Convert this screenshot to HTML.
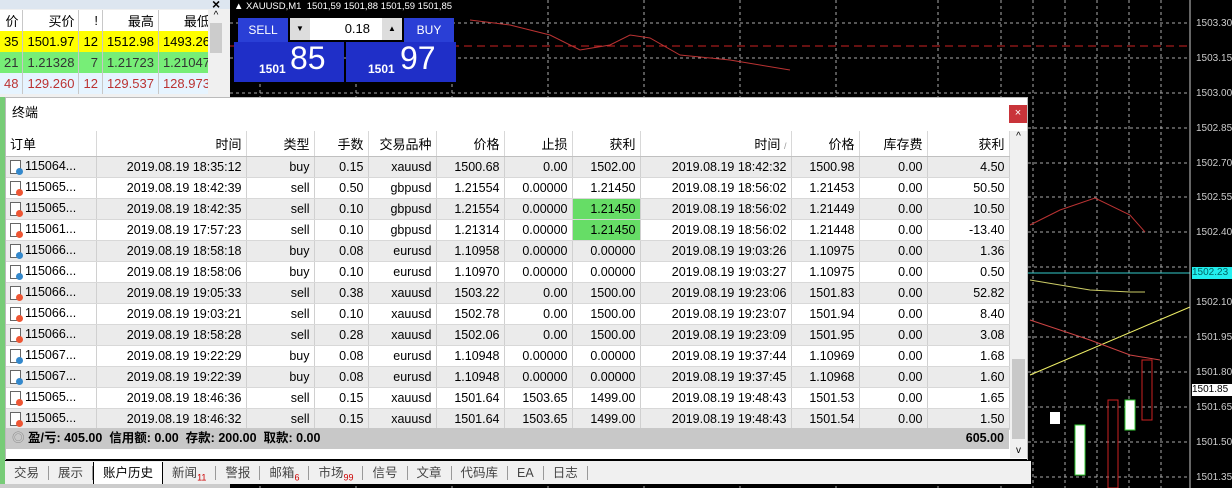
<!DOCTYPE html>
<html><head><meta charset="utf-8"><style>
*{margin:0;padding:0;box-sizing:border-box}
body{width:1232px;height:488px;overflow:hidden;background:#000;position:relative;font-family:"Liberation Sans","Noto Sans CJK SC",sans-serif;font-size:12px;color:#000}
.a{position:absolute}
.mw td{border-right:1px solid #c8c8c8;text-align:right;padding:0 4px;height:21px;font-size:13px}
table{border-collapse:collapse}
.t td{height:21px;border-right:1px solid #d0d0d0;border-bottom:1px solid #d8d8d8;text-align:right;padding:0 4px;font-size:12.5px;white-space:nowrap;overflow:hidden}
.t tr:nth-child(even) td{background:#ebebeb}
.t th{height:25px;font-weight:normal;text-align:right;padding:0 4px;border-right:1px solid #d8d8d8;border-bottom:1px solid #c0c0c0;font-size:13px;background:#fff}
.ic{display:inline-block;width:11px;height:14px;border:1px solid #666;background:#fff;vertical-align:middle;position:relative;margin-right:4px}
.ic i{position:absolute;right:-3px;bottom:-2px;width:7px;height:7px;border-radius:50%}
.pl{position:absolute;left:1196px;font-size:10px;color:#ccc}
.tab{display:inline-block;padding:0 9px;border-right:1px solid #999;height:14px;line-height:14px;color:#444;margin-top:5px;font-size:12.5px}
.tab sub{color:#c00;font-size:9px}
</style></head><body>
<svg class="a" style="left:230px;top:0" width="1002" height="488">
<g stroke="#aaa" stroke-dasharray="3,3" stroke-width="1">
<line x1="0" y1="23" x2="960" y2="23"/><line x1="0" y1="58" x2="960" y2="58"/><line x1="0" y1="93" x2="960" y2="93"/><line x1="0" y1="128" x2="960" y2="128"/><line x1="0" y1="163" x2="960" y2="163"/><line x1="0" y1="197" x2="960" y2="197"/><line x1="0" y1="232" x2="960" y2="232"/><line x1="0" y1="267" x2="960" y2="267"/><line x1="0" y1="302" x2="960" y2="302"/><line x1="0" y1="337" x2="960" y2="337"/><line x1="0" y1="372" x2="960" y2="372"/><line x1="0" y1="407" x2="960" y2="407"/><line x1="0" y1="442" x2="960" y2="442"/><line x1="0" y1="477" x2="960" y2="477"/>
<line x1="30" y1="0" x2="30" y2="488"/><line x1="126" y1="0" x2="126" y2="488"/><line x1="222" y1="0" x2="222" y2="488"/><line x1="318" y1="0" x2="318" y2="488"/><line x1="414" y1="0" x2="414" y2="488"/><line x1="510" y1="0" x2="510" y2="488"/><line x1="606" y1="0" x2="606" y2="488"/><line x1="708" y1="0" x2="708" y2="488"/><line x1="771" y1="0" x2="771" y2="488"/><line x1="803" y1="0" x2="803" y2="488"/><line x1="835" y1="0" x2="835" y2="488"/><line x1="867" y1="0" x2="867" y2="488"/><line x1="899" y1="0" x2="899" y2="488"/><line x1="931" y1="0" x2="931" y2="488"/>
</g>
<line x1="0" y1="46" x2="960" y2="46" stroke="#c22" stroke-dasharray="8,5"/>
<polyline points="240,20 280,25 320,35 350,50 380,45 400,35 420,38 450,55 500,60 560,70" fill="none" stroke="#b33"/>
<polyline points="800,225 830,210 865,198 900,215 915,232" fill="none" stroke="#b33"/>
<line x1="0" y1="273" x2="960" y2="273" stroke="#3cc"/>
<polyline points="800,280 860,290 900,292 915,292" fill="none" stroke="#cc6"/>
<line x1="800" y1="375" x2="960" y2="307" stroke="#ee6"/>
<polyline points="800,320 860,340 900,355 930,360" fill="none" stroke="#c44"/>
<rect x="820" y="412" width="10" height="12" fill="#fff"/><rect x="845" y="425" width="10" height="50" fill="#fff" stroke="#3c3"/>
<rect x="878" y="400" width="10" height="88" fill="none" stroke="#c22"/><rect x="895" y="400" width="10" height="30" fill="#fff" stroke="#3c3"/><rect x="912" y="360" width="10" height="60" fill="none" stroke="#c22"/>
<line x1="960" y1="0" x2="960" y2="488" stroke="#ccc"/>
</svg>
<div class="pl" style="top:18px">1503.30</div><div class="pl" style="top:53px">1503.15</div><div class="pl" style="top:88px">1503.00</div><div class="pl" style="top:123px">1502.85</div><div class="pl" style="top:158px">1502.70</div><div class="pl" style="top:192px">1502.55</div><div class="pl" style="top:227px">1502.40</div><div class="pl" style="top:297px">1502.10</div><div class="pl" style="top:332px">1501.95</div><div class="pl" style="top:367px">1501.80</div><div class="pl" style="top:402px">1501.65</div><div class="pl" style="top:437px">1501.50</div><div class="pl" style="top:472px">1501.35</div>
<div class="a" style="left:1192px;top:267px;width:40px;height:12px;background:#2ee;font-size:10px;color:#066">1502.23</div>
<div class="a" style="left:1192px;top:384px;width:40px;height:12px;background:#fff;font-size:10px">1501.85</div>
<div class="a" style="left:234px;top:0;width:222px;height:82px;color:#fff">
<div style="font-size:9.5px;height:15px;line-height:13px;white-space:nowrap;background:#000">▲ XAUUSD,M1 &nbsp;1501,59 1501,88 1501,59 1501,85</div>
<div class="a" style="left:4px;top:18px;width:50px;height:24px;background:#2a3fd6;text-align:center;line-height:24px;font-size:12px">SELL</div>
<div class="a" style="left:56px;top:18px;width:112px;height:22px;background:#fff;color:#000;text-align:right;padding-right:32px;line-height:22px;font-size:13px">0.18</div>
<div class="a" style="left:56px;top:18px;width:20px;height:22px;background:#ddd;color:#000;font-size:8px;text-align:center;line-height:22px">▼</div>
<div class="a" style="left:148px;top:18px;width:20px;height:22px;background:#ddd;color:#000;font-size:8px;text-align:center;line-height:22px">▲</div>
<div class="a" style="left:170px;top:18px;width:50px;height:24px;background:#2a3fd6;text-align:center;line-height:24px;font-size:12px">BUY</div>
<div class="a" style="left:0;top:42px;width:110px;height:40px;background:#1f2fc8"><span style="position:absolute;left:25px;top:20px;font-size:12px;font-weight:bold">1501</span><span style="position:absolute;left:56px;top:-2px;font-size:32px">85</span></div>
<div class="a" style="left:112px;top:42px;width:110px;height:40px;background:#1f2fc8"><span style="position:absolute;left:22px;top:20px;font-size:12px;font-weight:bold">1501</span><span style="position:absolute;left:54px;top:-2px;font-size:32px">97</span></div>
</div>
<div class="a" style="left:0;top:0;width:230px;height:97px;background:#f0f0f0">
<div style="height:9px;background:#dde6f0"></div>
<div class="a" style="left:212px;top:-4px;font-size:14px;font-weight:bold">×</div>
<table class="mw" style="position:absolute;top:10px;left:0;width:208px">
<tr style="background:#fff"><td style="width:14px">价</td><td>买价</td><td>!</td><td>最高</td><td>最低</td></tr>
<tr style="background:#ffff00"><td>35</td><td>1501.97</td><td>12</td><td>1512.98</td><td>1493.26</td></tr>
<tr style="background:#77ee77;color:#333"><td>21</td><td>1.21328</td><td>7</td><td>1.21723</td><td>1.21047</td></tr>
<tr style="background:#e6f4ff;color:#b33"><td>48</td><td>129.260</td><td>12</td><td>129.537</td><td>128.973</td></tr>
</table>
<div class="a" style="left:208px;top:10px;width:16px;height:87px;background:#f0f0f0;font-size:10px;text-align:center">^<div style="margin:2px 2px;height:30px;background:#ccc"></div></div>
</div>
<div class="a" style="left:0;top:97px;width:5px;height:391px;background:#7c7"></div>
<div class="a" style="left:5px;top:97px;width:1023px;height:363px;background:#fff;border:1px solid #bbb">
<div style="height:33px;line-height:30px;padding-left:6px;font-size:13px">终端</div>
<div class="a" style="left:1003px;top:7px;width:18px;height:18px;background:#c9343a;color:#fff;text-align:center;line-height:17px;font-size:11px">×</div>
<div class="a" style="left:1004px;top:33px;width:17px;height:327px;background:#f0f0f0;font-size:10px;text-align:center">^<div style="position:absolute;top:228px;left:2px;width:13px;height:80px;background:#c8c8c8"></div><div style="position:absolute;bottom:2px;width:17px">v</div></div>
<table class="t" style="position:absolute;top:33px;left:0;width:1003px;table-layout:fixed">
<colgroup><col style="width:90px"><col style="width:150px"><col style="width:68px"><col style="width:54px"><col style="width:68px"><col style="width:68px"><col style="width:68px"><col style="width:68px"><col style="width:151px"><col style="width:68px"><col style="width:68px"><col style="width:82px"></colgroup>
<tr><th style="text-align:left">订单</th><th>时间</th><th>类型</th><th>手数</th><th>交易品种</th><th>价格</th><th>止损</th><th>获利</th><th>时间 <span style="color:#999;font-size:9px">/</span></th><th>价格</th><th>库存费</th><th>获利</th></tr>
<tr><td style="text-align:left"><span class="ic"><i style="background:#38c"></i></span>115064...</td><td>2019.08.19 18:35:12</td><td>buy</td><td>0.15</td><td>xauusd</td><td>1500.68</td><td>0.00</td><td>1502.00</td><td>2019.08.19 18:42:32</td><td>1500.98</td><td>0.00</td><td>4.50</td></tr>
<tr><td style="text-align:left"><span class="ic"><i style="background:#e53"></i></span>115065...</td><td>2019.08.19 18:42:39</td><td>sell</td><td>0.50</td><td>gbpusd</td><td>1.21554</td><td>0.00000</td><td>1.21450</td><td>2019.08.19 18:56:02</td><td>1.21453</td><td>0.00</td><td>50.50</td></tr>
<tr><td style="text-align:left"><span class="ic"><i style="background:#e53"></i></span>115065...</td><td>2019.08.19 18:42:35</td><td>sell</td><td>0.10</td><td>gbpusd</td><td>1.21554</td><td>0.00000</td><td style="background:#6d6">1.21450</td><td>2019.08.19 18:56:02</td><td>1.21449</td><td>0.00</td><td>10.50</td></tr>
<tr><td style="text-align:left"><span class="ic"><i style="background:#e53"></i></span>115061...</td><td>2019.08.19 17:57:23</td><td>sell</td><td>0.10</td><td>gbpusd</td><td>1.21314</td><td>0.00000</td><td style="background:#6d6">1.21450</td><td>2019.08.19 18:56:02</td><td>1.21448</td><td>0.00</td><td>-13.40</td></tr>
<tr><td style="text-align:left"><span class="ic"><i style="background:#38c"></i></span>115066...</td><td>2019.08.19 18:58:18</td><td>buy</td><td>0.08</td><td>eurusd</td><td>1.10958</td><td>0.00000</td><td>0.00000</td><td>2019.08.19 19:03:26</td><td>1.10975</td><td>0.00</td><td>1.36</td></tr>
<tr><td style="text-align:left"><span class="ic"><i style="background:#38c"></i></span>115066...</td><td>2019.08.19 18:58:06</td><td>buy</td><td>0.10</td><td>eurusd</td><td>1.10970</td><td>0.00000</td><td>0.00000</td><td>2019.08.19 19:03:27</td><td>1.10975</td><td>0.00</td><td>0.50</td></tr>
<tr><td style="text-align:left"><span class="ic"><i style="background:#e53"></i></span>115066...</td><td>2019.08.19 19:05:33</td><td>sell</td><td>0.38</td><td>xauusd</td><td>1503.22</td><td>0.00</td><td>1500.00</td><td>2019.08.19 19:23:06</td><td>1501.83</td><td>0.00</td><td>52.82</td></tr>
<tr><td style="text-align:left"><span class="ic"><i style="background:#e53"></i></span>115066...</td><td>2019.08.19 19:03:21</td><td>sell</td><td>0.10</td><td>xauusd</td><td>1502.78</td><td>0.00</td><td>1500.00</td><td>2019.08.19 19:23:07</td><td>1501.94</td><td>0.00</td><td>8.40</td></tr>
<tr><td style="text-align:left"><span class="ic"><i style="background:#e53"></i></span>115066...</td><td>2019.08.19 18:58:28</td><td>sell</td><td>0.28</td><td>xauusd</td><td>1502.06</td><td>0.00</td><td>1500.00</td><td>2019.08.19 19:23:09</td><td>1501.95</td><td>0.00</td><td>3.08</td></tr>
<tr><td style="text-align:left"><span class="ic"><i style="background:#38c"></i></span>115067...</td><td>2019.08.19 19:22:29</td><td>buy</td><td>0.08</td><td>eurusd</td><td>1.10948</td><td>0.00000</td><td>0.00000</td><td>2019.08.19 19:37:44</td><td>1.10969</td><td>0.00</td><td>1.68</td></tr>
<tr><td style="text-align:left"><span class="ic"><i style="background:#38c"></i></span>115067...</td><td>2019.08.19 19:22:39</td><td>buy</td><td>0.08</td><td>eurusd</td><td>1.10948</td><td>0.00000</td><td>0.00000</td><td>2019.08.19 19:37:45</td><td>1.10968</td><td>0.00</td><td>1.60</td></tr>
<tr><td style="text-align:left"><span class="ic"><i style="background:#e53"></i></span>115065...</td><td>2019.08.19 18:46:36</td><td>sell</td><td>0.15</td><td>xauusd</td><td>1501.64</td><td>1503.65</td><td>1499.00</td><td>2019.08.19 19:48:43</td><td>1501.53</td><td>0.00</td><td>1.65</td></tr>
<tr><td style="text-align:left"><span class="ic"><i style="background:#e53"></i></span>115065...</td><td>2019.08.19 18:46:32</td><td>sell</td><td>0.15</td><td>xauusd</td><td>1501.64</td><td>1503.65</td><td>1499.00</td><td>2019.08.19 19:48:43</td><td>1501.54</td><td>0.00</td><td>1.50</td></tr>
</table>
<div class="a" style="left:0;top:330px;width:1003px;height:21px;background:#c8c8c8;font-weight:bold;font-size:12.5px;line-height:21px;padding-left:6px"><span style="color:#888;font-weight:normal">◎</span> 盈/亏: 405.00 &nbsp;信用额: 0.00 &nbsp;存款: 200.00 &nbsp;取款: 0.00<span style="position:absolute;right:5px">605.00</span></div>
<div class="a" style="left:0;top:361px;width:1021px;height:1px;background:#000"></div>
</div>
<div class="a" style="left:5px;top:460px;width:1026px;height:24px;background:#f0f0f0;border-top:1px solid #000;white-space:nowrap">
<span class="tab">交易</span><span class="tab">展示</span><span class="tab" style="background:#fff;border:1px solid #000;border-top:none;height:24px;margin-top:-1px;line-height:22px;color:#000">账户历史</span><span class="tab">新闻<sub>11</sub></span><span class="tab">警报</span><span class="tab">邮箱<sub>6</sub></span><span class="tab">市场<sub>99</sub></span><span class="tab">信号</span><span class="tab">文章</span><span class="tab">代码库</span><span class="tab">EA</span><span class="tab">日志</span>
</div>
<div class="a" style="left:0;top:484px;width:230px;height:4px;background:#ccc"></div>
</body></html>
